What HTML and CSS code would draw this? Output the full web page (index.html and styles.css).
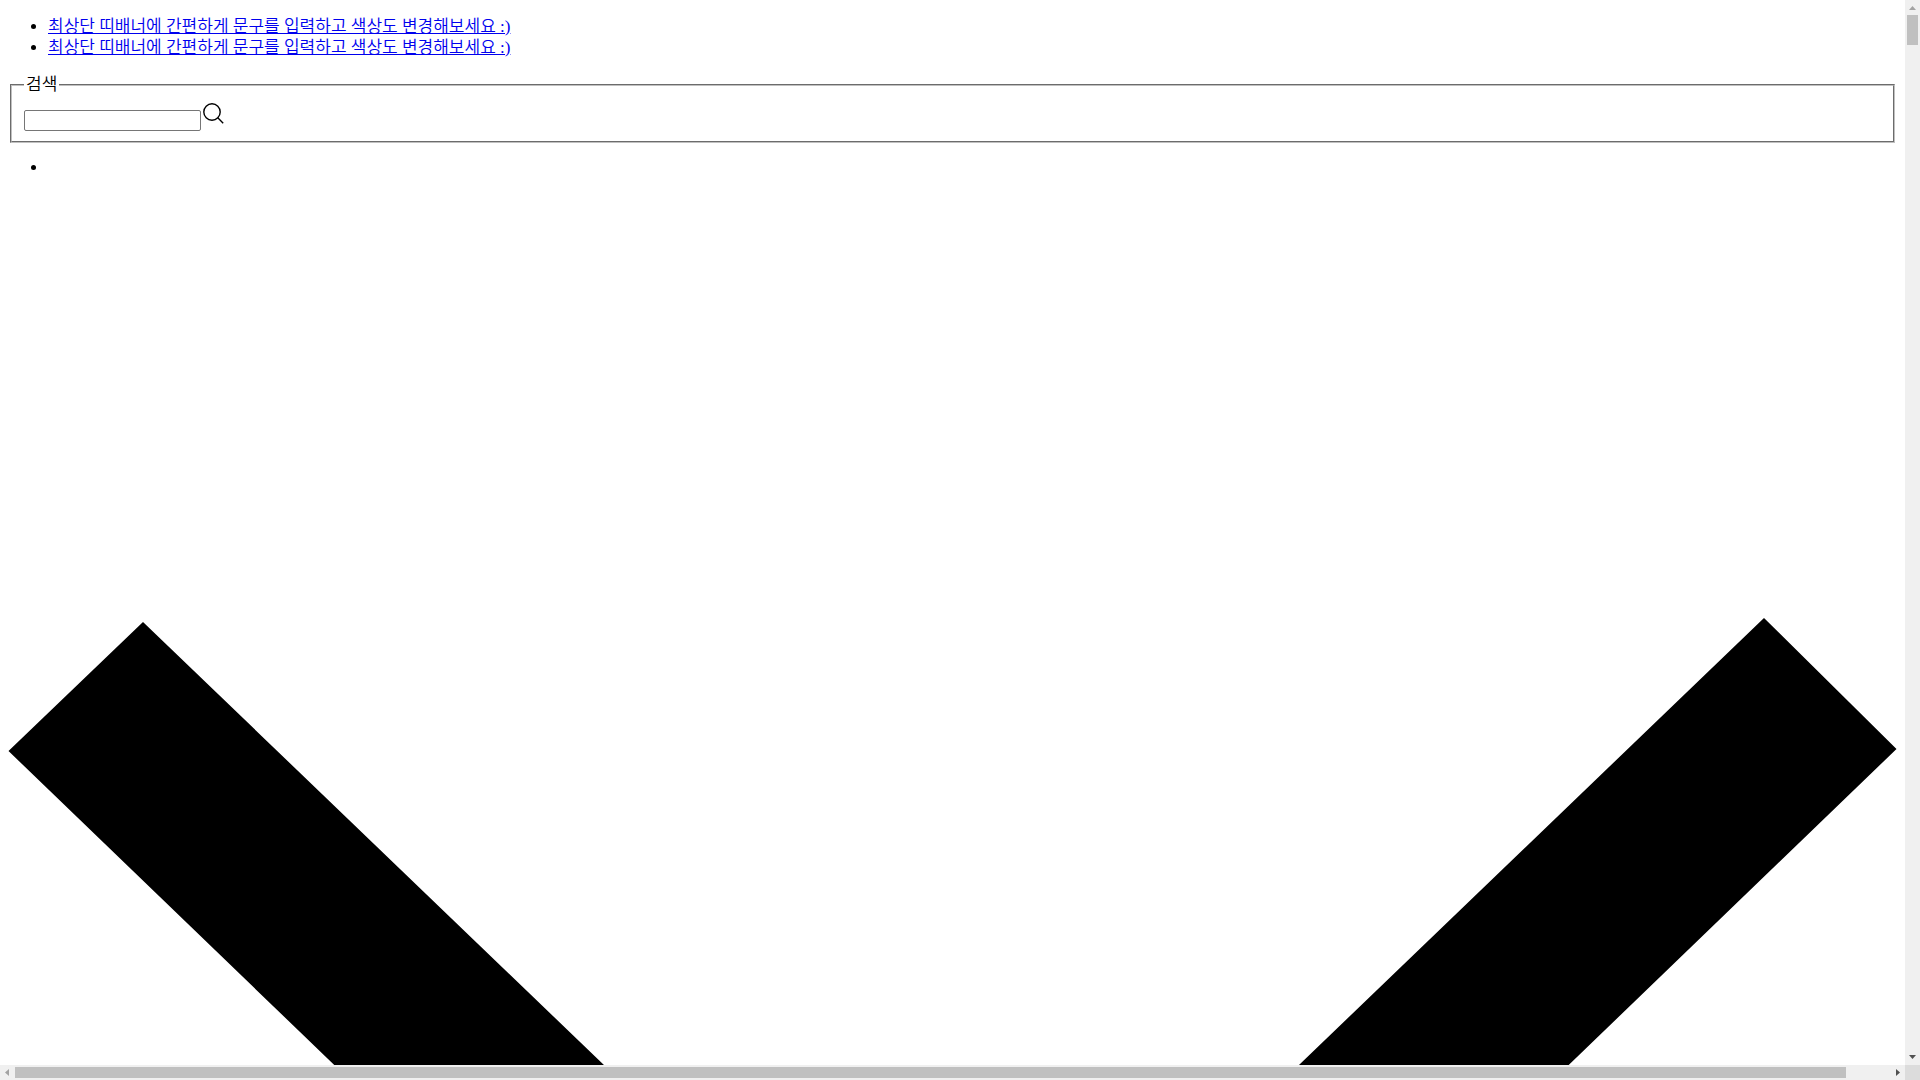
FILE: index.html
```html
<!DOCTYPE html>
<html lang="ko">
<head>
    <meta charset="UTF-8">
    <meta name="viewport" content="width=device-width, initial-scale=1.0">
    <title>쇼핑몰</title>
    <link rel="stylesheet" href="styles.css">
</head>
<body>
    <div class="page">
        <ul class="top-banner">
            <li><a href="#">최상단 띠배너에 간편하게 문구를 입력하고 색상도 변경해보세요 :)</a></li>
            <li><a href="#">최상단 띠배너에 간편하게 문구를 입력하고 색상도 변경해보세요 :)</a></li>
        </ul>
        <form class="search-form">
            <fieldset>
                <legend><label for="keyword">검색</label></legend>
                <input type="text" id="keyword" name="keyword"><svg class="search-icon" viewBox="0 0 24 24" fill="none" stroke="#000" stroke-width="1.4">
                    <circle cx="11" cy="11" r="8.2"/>
                    <path d="M16.8 16.8L22.2 22.2"/>
                </svg>
            </fieldset>
        </form>
        <ul class="menu">
            <li></li>
        </ul>
        <svg class="arrow" viewBox="0 0 1889 1889">
            <path d="M0.5 558L135 429L943.5 1206L1756 425L1888.5 556L943.5 1467Z"/>
        </svg>
    </div>
    <div class="scrollbar vertical">
        <svg class="scroll-btn disabled" viewBox="0 0 15 15"><path d="M4 10L7.5 6L11 10Z"/></svg>
        <div class="thumb"></div>
        <svg class="scroll-btn" viewBox="0 0 15 15"><path d="M4 5L7.5 9L11 5Z"/></svg>
    </div>
    <div class="scrollbar horizontal">
        <svg class="scroll-btn disabled" viewBox="0 0 15 15"><path d="M9 4L5 7.5L9 11Z"/></svg>
        <div class="thumb"></div>
        <svg class="scroll-btn" viewBox="0 0 15 15"><path d="M6 4L10 7.5L6 11Z"/></svg>
    </div>
    <div class="corner"></div>
</body>
</html>
```
FILE: styles.css
```css
body {
    margin: 0;
    height: 100vh;
    display: grid;
    grid-template-columns: 1fr 15px;
    grid-template-rows: minmax(0, 1fr) 15px;
    font-family: "Liberation Serif", "Noto Sans CJK KR", serif;
    font-size: 17px;
    font-weight: 350;
    line-height: 21px;
}
.page {
    overflow: hidden;
    padding: 0 8px;
}
ul {
    margin: 16px 0;
    padding-left: 40px;
}
a {
    color: #0000ee;
}
fieldset {
    margin: 0 2px;
    padding: 6px 12px 10px;
    border: 2px groove #c0c0c0;
}
legend {
    padding: 0 2px;
}
input {
    box-sizing: border-box;
    width: 177px;
    height: 21px;
    border: 1px solid #767676;
    border-radius: 2px;
}
.search-icon {
    width: 24px;
    height: 24px;
}
.menu {
    line-height: 18px;
}
.arrow {
    display: block;
    width: 100%;
    overflow: visible;
}

/* scrollbars */
.scrollbar {
    display: flex;
    background: #f0f0f0;
}
.vertical {
    flex-direction: column;
}
.scroll-btn {
    width: 15px;
    height: 15px;
    flex: none;
    fill: #505050;
}
.scroll-btn.disabled {
    fill: #a3a3a3;
}
.thumb {
    background: #c0c0c0;
}
.vertical .thumb {
    height: 30px;
    margin: 0 2px auto;
}
.horizontal .thumb {
    flex: 1;
    margin: 2px 44px 2px 0;
}
.corner {
    background: #dcdcdc;
}
```
